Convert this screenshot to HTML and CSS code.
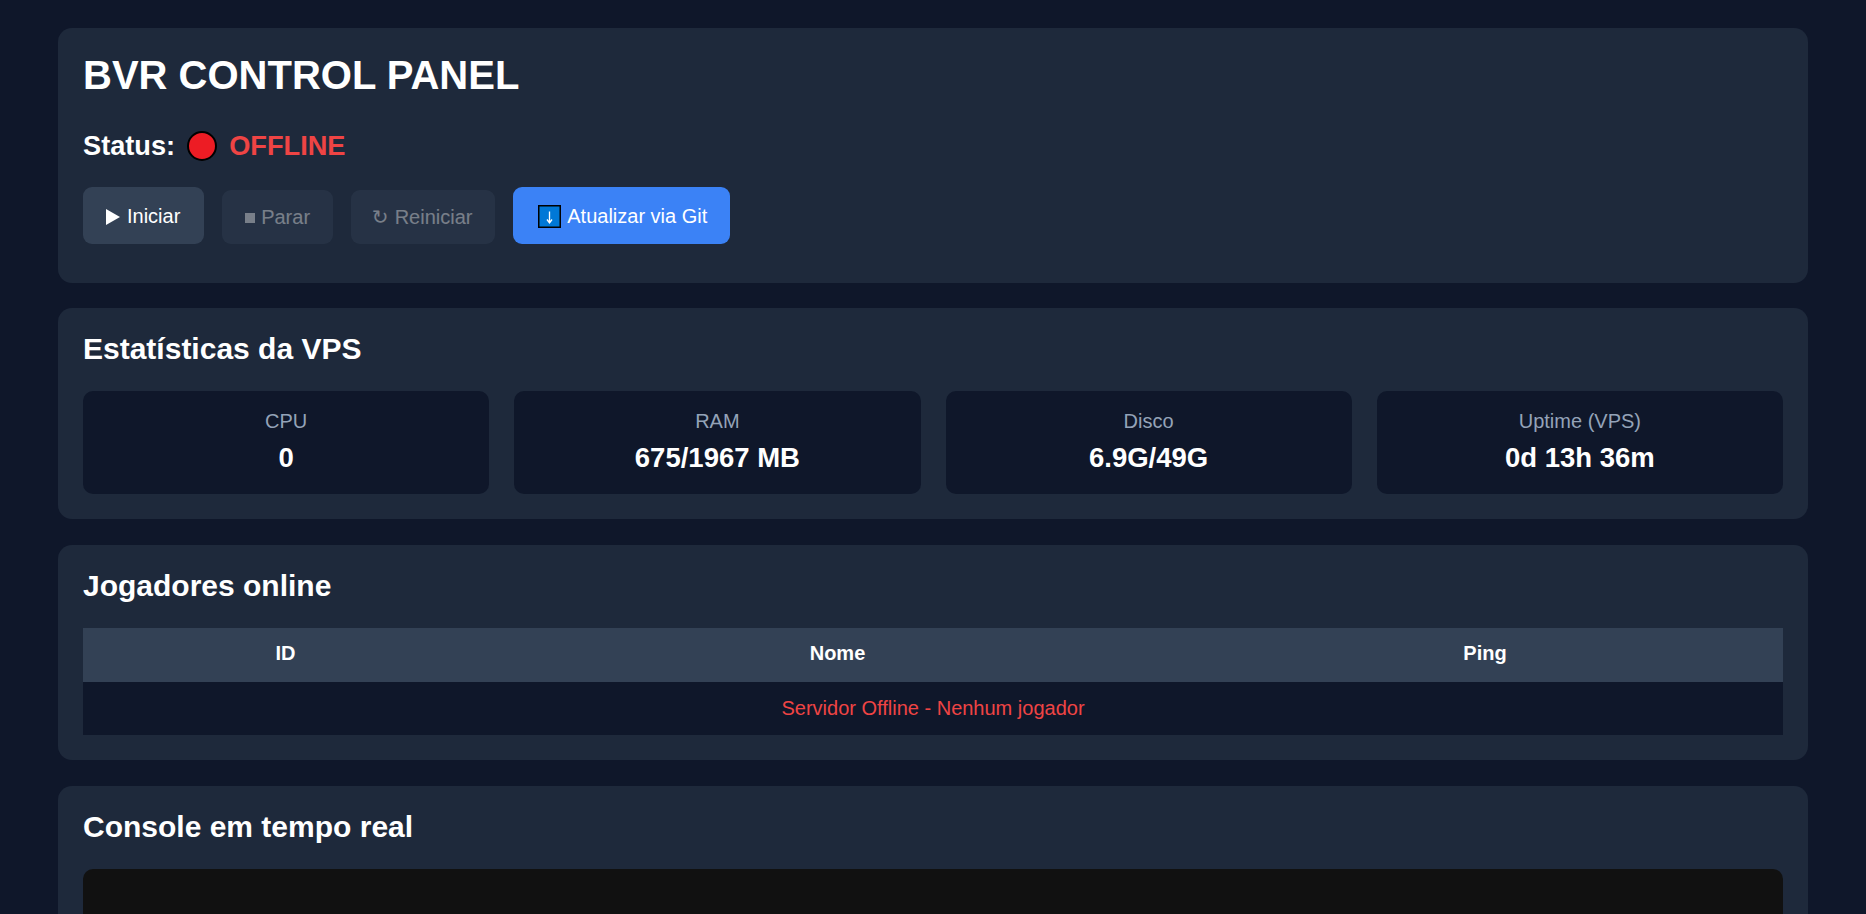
FILE: index.html
```html
<!DOCTYPE html>
<html>
<head>
  <title>BVR Control Panel</title>
  <link rel="stylesheet" href="styles.css">
</head>
<body>
  <div class="card">
    <h1>BVR CONTROL PANEL</h1>
    <div class="status">
      <span>Status:</span>
      <svg class="status-dot" viewBox="0 0 30 30"><circle cx="15" cy="15" r="14" fill="#ed1c24" stroke="#000" stroke-width="2"/></svg>
      <span class="offline">OFFLINE</span>
    </div>
    <div class="buttons">
      <button class="btn btn-start">
        <svg class="icon-play" viewBox="0 0 14 16"><path d="M0 0 L14 8 L0 16 Z" fill="#fff"/></svg>
        Iniciar
      </button>
      <button class="btn btn-off">
        <span class="icon-stop"></span>
        Parar
      </button>
      <button class="btn btn-off btn-restart"><span class="icon-restart">↻</span> Reiniciar</button>
      <button class="btn btn-git">
        <svg class="icon-git" viewBox="0 0 23 23">
          <rect x="0.75" y="0.75" width="21.5" height="21.5" fill="#0078d7" stroke="#000" stroke-width="1.5"/>
          <path d="M11.5 6.5 V17.5 M9 14.5 L11.5 18 L14 14.5" fill="none" stroke="#fff" stroke-width="1.3"/>
        </svg>
        Atualizar via Git
      </button>
    </div>
  </div>

  <div class="card">
    <h2>Estatísticas da VPS</h2>
    <div class="stats">
      <div class="stat"><div class="stat-label">CPU</div><div class="stat-value">0</div></div>
      <div class="stat"><div class="stat-label">RAM</div><div class="stat-value">675/1967 MB</div></div>
      <div class="stat"><div class="stat-label">Disco</div><div class="stat-value">6.9G/49G</div></div>
      <div class="stat"><div class="stat-label">Uptime (VPS)</div><div class="stat-value">0d 13h 36m</div></div>
    </div>
  </div>

  <div class="card">
    <h2>Jogadores online</h2>
    <table>
      <thead>
        <tr>
          <th class="col-id">ID</th>
          <th class="col-name">Nome</th>
          <th>Ping</th>
        </tr>
      </thead>
      <tbody>
        <tr><td colspan="3" class="empty">Servidor Offline - Nenhum jogador</td></tr>
      </tbody>
    </table>
  </div>

  <div class="card card-console">
    <h2>Console em tempo real</h2>
    <div class="console"></div>
  </div>
</body>
</html>
```

FILE: styles.css
```css
* {
  box-sizing: border-box;
}

html, body {
  height: 100%;
  overflow: hidden;
}

body {
  margin: 0;
  padding: 28px 58px;
  background-color: #0f172a;
  color: #fff;
  font-family: "Liberation Sans", Arial, sans-serif;
}

.card {
  background-color: #1e293b;
  border-radius: 14px;
  padding: 25px;
  margin-bottom: 25.4px;
}

.card-console {
  margin-top: 26px;
}

h1 {
  margin: 0;
  font-size: 40px;
  line-height: 44px;
  font-weight: bold;
}

h2 {
  margin: 0 0 26px 0;
  font-size: 30px;
  line-height: 32px;
  font-weight: bold;
}

.status {
  display: flex;
  align-items: center;
  gap: 12px;
  margin-top: 33px;
  font-size: 27.2px;
  font-weight: bold;
  height: 31px;
}

.status-dot {
  width: 30px;
  height: 30px;
}

.offline {
  color: #ef4444;
}

.buttons {
  display: flex;
  align-items: flex-end;
  gap: 17.8px;
  margin-top: 26px;
  margin-bottom: 14px;
}

.btn {
  display: flex;
  align-items: center;
  justify-content: center;
  gap: 6px;
  border: none;
  border-radius: 9px;
  height: 57px;
  padding: 0 23px;
  color: #fff;
  font-family: inherit;
  font-size: 20px;
}

.btn-start {
  gap: 7px;
  padding: 2px 24px 0 23px;
  background-color: #334155;
}

.btn-off {
  height: 54px;
  background-color: #334155;
  opacity: 0.4;
}

.btn-restart {
  padding-left: 21px;
}

.btn-git {
  padding: 2px 23px 0 25px;
  background-color: #3b82f6;
}

.icon-play {
  width: 14px;
  height: 16px;
}

.icon-stop {
  width: 10px;
  height: 10px;
  margin-top: 2px;
  background-color: #fff;
}

.icon-restart {
  font-family: "DejaVu Sans", sans-serif;
}

.icon-git {
  width: 23px;
  height: 23px;
}

.stats {
  display: grid;
  grid-template-columns: repeat(4, 1fr);
  gap: 25px;
}

.stat {
  background-color: #0f172a;
  border-radius: 10px;
  padding-top: 19px;
  height: 103px;
  text-align: center;
}

.stat-label {
  color: #94a3b8;
  font-size: 20px;
  line-height: 22px;
}

.stat-value {
  margin-top: 10px;
  font-size: 27.5px;
  line-height: 32px;
  font-weight: bold;
}

table {
  width: 100%;
  border-collapse: collapse;
  table-layout: fixed;
}

th {
  height: 54px;
  padding-bottom: 3px;
  background-color: #334155;
  font-size: 20px;
  font-weight: bold;
  text-align: center;
}

.col-id {
  width: 405px;
}

.col-name {
  width: 699px;
}

td {
  height: 53px;
  background-color: #0f172a;
  font-size: 20px;
  text-align: center;
}

.empty {
  color: #ef4444;
}

.console {
  height: 400px;
  background-color: #111;
  border-radius: 10px;
}
```
